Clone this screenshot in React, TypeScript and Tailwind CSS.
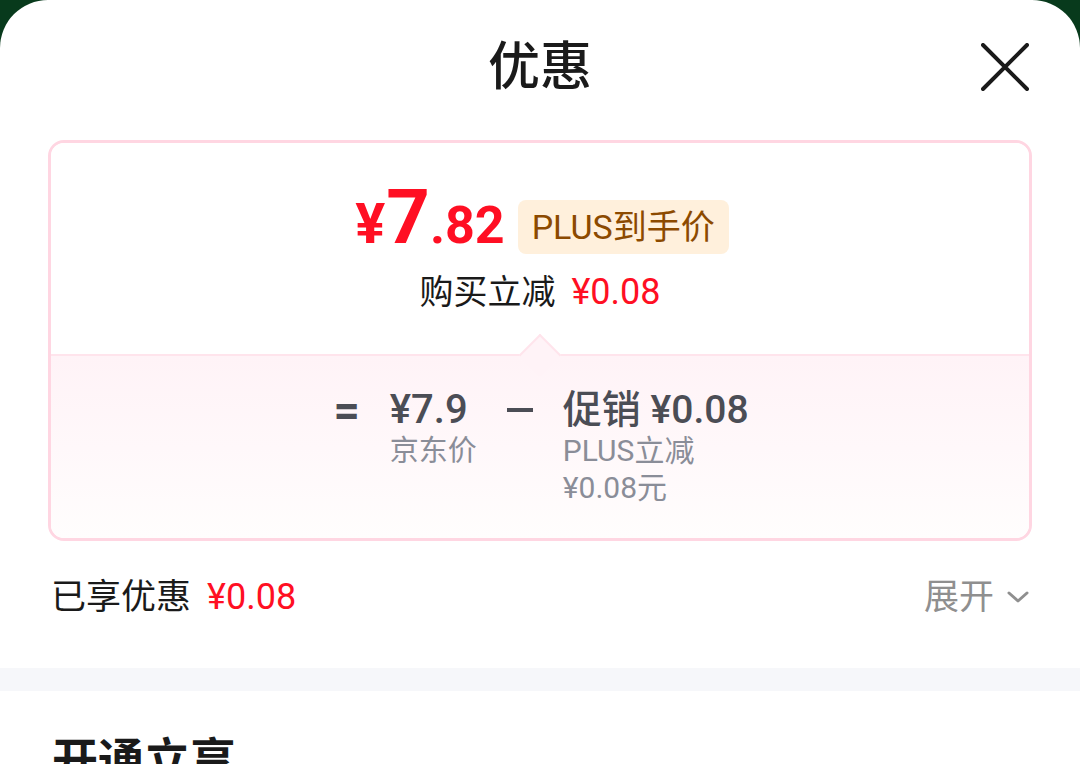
import React from "react";

const font = { fontFamily: "Roboto, 'Noto Sans CJK SC', sans-serif" };

function CloseIcon() {
  return (
    <svg width="48" height="48" viewBox="0 0 48 48" fill="none">
      <path d="M2 2L46 46M46 2L2 46" stroke="#1a1a1a" strokeWidth="4" strokeLinecap="round" />
    </svg>
  );
}

function Chevron() {
  return (
    <svg width="24" height="16" viewBox="0 0 24 16" fill="none">
      <path d="M3 4L12 12L21 4" stroke="#8f8f8f" strokeWidth="3" strokeLinecap="round" strokeLinejoin="round" />
    </svg>
  );
}

export default function App() {
  return (
    <div className="w-[1080px] h-[764px] bg-[#083a1c] overflow-hidden" style={font}>
      <div className="bg-white rounded-t-[48px] h-full">
        {/* header */}
        <div className="grid grid-cols-[1fr_auto_1fr] items-center h-[134px]">
          <div />
          <h1 className="text-[52px] leading-none font-medium text-[#1a1a1a] pt-[2px]">优惠</h1>
          <div className="flex justify-end pr-[51px]">
            <CloseIcon />
          </div>
        </div>

        {/* price card */}
        <div className="mx-[48px] mt-[6px] border-[3px] border-[#ffd6e2] rounded-[16px] overflow-hidden">
          <div className="h-[211px] flex flex-col items-center pt-[36px] bg-white">
            <div className="flex items-end gap-[13px] ml-[4px]">
              <div className="flex items-baseline text-[#ff0f23] font-bold leading-none">
                <span className="text-[56px]">¥</span>
                <span className="text-[76px] ml-[1px]">7</span>
                <span className="text-[52px]">.82</span>
              </div>
              <div className="bg-[#fff0dc] rounded-[8px] h-[54px] px-[14px] flex items-center text-[34px] text-[#8c4a00] mb-[1px]">
                PLUS到手价
              </div>
            </div>
            <div className="mt-[19px] flex items-center gap-[16px] text-[34px] leading-none">
              <span className="text-[#1a1a1a]">购买立减</span>
              <span className="text-[36px] text-[#ff0f23]">¥0.08</span>
            </div>
          </div>

          <div className="relative h-[184px] border-t-2 border-[#ffe4ec] bg-gradient-to-b from-[#fff3f7] to-[#fffdfd]">
            <div className="absolute left-1/2 -top-[16px] -ml-[15px] w-[30px] h-[30px] rotate-45 border-t-2 border-l-2 border-[#ffe4ec] bg-[#fff3f7]" />
            <div className="relative flex justify-center items-start gap-[30px] pt-[32px] ml-[2px]">
              <span className="text-[46px] leading-[44px] font-bold text-[#4b4d55]">=</span>
              <div className="flex flex-col">
                <span className="text-[40px] leading-[44px] font-medium text-[#4b4d55]">¥7.9</span>
                <span className="text-[29px] leading-[38px] text-[#8a8d98]">京东价</span>
              </div>
              <span className="h-[44px] flex items-center">
                <span className="block w-[26px] h-[4px] bg-[#4b4d55]" />
              </span>
              <div className="flex flex-col">
                <span className="text-[39px] leading-[44px] font-medium text-[#4b4d55]">促销 ¥0.08</span>
                <span className="text-[30px] leading-[38px] text-[#8a8d98]">PLUS立减</span>
                <span className="text-[30px] leading-[36px] text-[#8a8d98]">¥0.08元</span>
              </div>
            </div>
          </div>
        </div>

        {/* discount row */}
        <div className="flex items-center justify-between h-[112px] pl-[51px] pr-[50px]">
          <div className="flex items-center gap-[16px] text-[35px] leading-none">
            <span className="text-[#1a1a1a]">已享优惠</span>
            <span className="text-[36px] text-[#ff0f23]">¥0.08</span>
          </div>
          <div className="flex items-center gap-[12px] text-[35px] leading-none text-[#8f8f8f]">
            <span>展开</span>
            <Chevron />
          </div>
        </div>

        <div className="mt-[15px] h-[23px] bg-[#f6f7fa]" />

        <div className="pt-[46px] pl-[52px]">
          <h2 className="text-[46px] leading-none font-bold text-[#1a1a1a]">开通立享</h2>
        </div>
      </div>
    </div>
  );
}
